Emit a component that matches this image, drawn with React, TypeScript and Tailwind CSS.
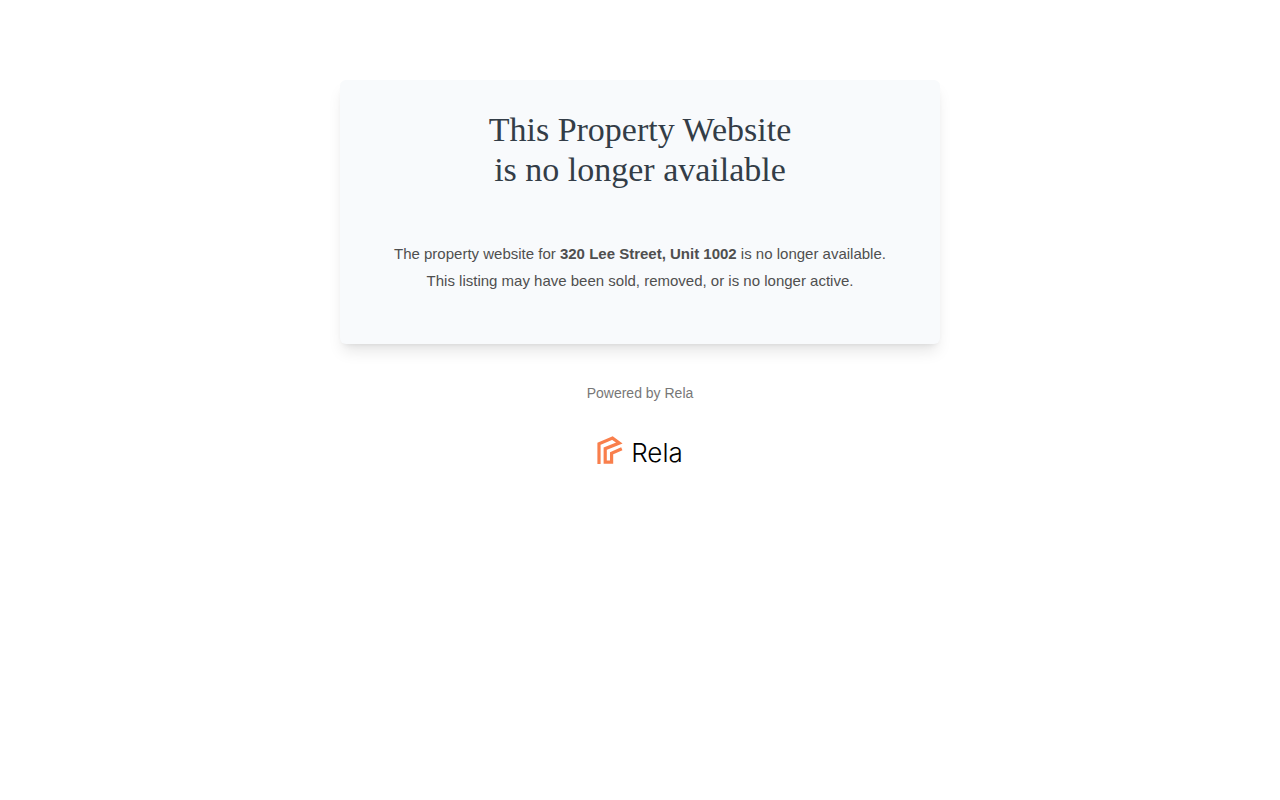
export default function App() {
  return (
    <main className="flex flex-col items-center bg-white px-4 pt-20 font-['Liberation_Sans',Arial,sans-serif]">
      <section className="w-full max-w-[600px] rounded-md bg-[#f8fafc] px-8 pt-[30px] pb-[50px] text-center shadow-lg">
        <h1 className="font-['Liberation_Serif',serif] text-[34px] leading-10 text-[#333d47]">
          This Property Website
          <br />
          is no longer available
        </h1>
        <p className="mt-[50px] text-[15px] leading-[27px] text-[#4f4f4f]">
          The property website for <strong>320 Lee Street, Unit 1002</strong> is no longer available.
          <br />
          This listing may have been sold, removed, or is no longer active.
        </p>
      </section>
      <footer className="mt-10 flex flex-col items-center">
        <p className="text-sm leading-[18px] text-[#777]">Powered by Rela</p>
        <div className="mt-[34px] flex items-start gap-2" role="img" aria-label="Rela">
          <svg className="h-7 w-[26px]" viewBox="0 0 26 28" fill="none" stroke="#f97f4c" strokeWidth="3.2">
            <path d="M2 28V7.9L15.5 2.1L22.3 7L8.2 12.7V26.2H14.6V17.2L24.8 12.8" />
          </svg>
          <span className="pt-[3px] font-['Inter',sans-serif] text-[26px] leading-7 font-light text-black">Rela</span>
        </div>
      </footer>
    </main>
  );
}
